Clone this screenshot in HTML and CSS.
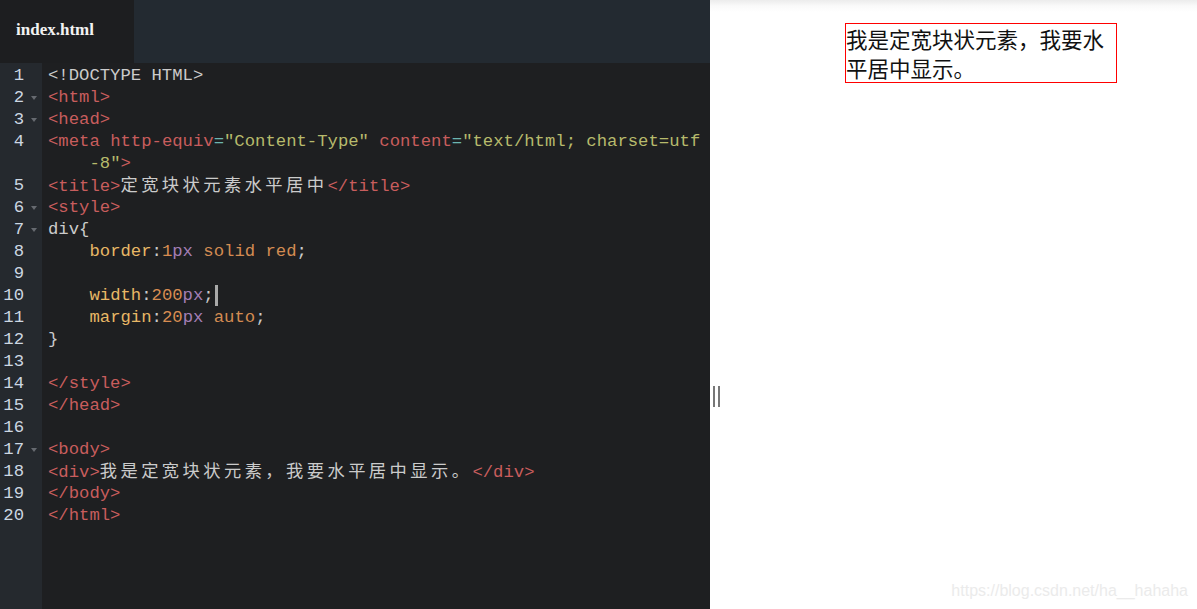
FILE: index.html
```html
<!DOCTYPE html>
<html lang="zh">
<head>
  <meta charset="UTF-8" />
  <meta name="viewport" content="width=device-width, initial-scale=1.0"/>
  <title>定宽块状元素水平居中</title>
  <link rel="stylesheet" href="styles.css">
</head>
<body>

<div class="editor-pane">
  <div class="tab-bar">
    <div class="tab">index.html</div>
  </div>

  <div class="code">
    <div class="line"><span class="ln">1</span><span class="src">&lt;!DOCTYPE HTML&gt;</span></div>
    <div class="line"><span class="ln fold">2</span><span class="src"><span class="tag">&lt;html&gt;</span></span></div>
    <div class="line"><span class="ln fold">3</span><span class="src"><span class="tag">&lt;head&gt;</span></span></div>
    <div class="line"><span class="ln">4</span><span class="src"><span class="tag">&lt;meta</span> <span class="tag">http-equiv</span><span class="eq">=</span><span class="str">"Content-Type"</span> <span class="tag">content</span><span class="eq">=</span><span class="str">"text/html; charset=utf</span></span></div>
    <div class="line"><span class="ln"></span><span class="src">    <span class="str">-8"</span><span class="tag">&gt;</span></span></div>
    <div class="line"><span class="ln">5</span><span class="src"><span class="tag">&lt;title&gt;</span><span class="cjk">定宽块状元素水平居中</span><span class="tag">&lt;/title&gt;</span></span></div>
    <div class="line"><span class="ln fold">6</span><span class="src"><span class="tag">&lt;style&gt;</span></span></div>
    <div class="line"><span class="ln fold">7</span><span class="src">div{</span></div>
    <div class="line"><span class="ln">8</span><span class="src">    <span class="prop">border</span>:<span class="num">1</span><span class="unit">px</span> <span class="kw">solid red</span>;</span></div>
    <div class="line"><span class="ln">9</span><span class="src"></span></div>
    <div class="line"><span class="ln">10</span><span class="src">    <span class="prop">width</span>:<span class="num">200</span><span class="unit">px</span>;<span class="cursor"></span></span></div>
    <div class="line"><span class="ln">11</span><span class="src">    <span class="prop">margin</span>:<span class="num">20</span><span class="unit">px</span> <span class="kw">auto</span>;</span></div>
    <div class="line"><span class="ln">12</span><span class="src">}</span></div>
    <div class="line"><span class="ln">13</span><span class="src"></span></div>
    <div class="line"><span class="ln">14</span><span class="src"><span class="tag">&lt;/style&gt;</span></span></div>
    <div class="line"><span class="ln">15</span><span class="src"><span class="tag">&lt;/head&gt;</span></span></div>
    <div class="line"><span class="ln">16</span><span class="src"></span></div>
    <div class="line"><span class="ln fold">17</span><span class="src"><span class="tag">&lt;body&gt;</span></span></div>
    <div class="line"><span class="ln">18</span><span class="src"><span class="tag">&lt;div&gt;</span><span class="cjk">我是定宽块状元素，我要水平居中显示。</span><span class="tag">&lt;/div&gt;</span></span></div>
    <div class="line"><span class="ln">19</span><span class="src"><span class="tag">&lt;/body&gt;</span></span></div>
    <div class="line"><span class="ln">20</span><span class="src"><span class="tag">&lt;/html&gt;</span></span></div>
  </div>
</div>

<div class="preview-pane">
  <div class="resize-handle"></div>
  <div class="demo-box">我是定宽块状元素，我要水平居中显示。</div>
  <div class="watermark">https://blog.csdn.net/ha__hahaha</div>
</div>

</body>
</html>
```

FILE: styles.css
```css
html, body {
  margin: 0;
  padding: 0;
  height: 100%;
}

body {
  display: flex;
  overflow: hidden;
}

/* editor */
.editor-pane {
  width: 710px;
  display: flex;
  flex-direction: column;
  background: #1e1f21;
}

.tab-bar {
  height: 63px;
  background: #232a31;
  display: flex;
}

.tab {
  width: 134px;
  background: #1d1e20;
  color: #f2f2f2;
  font-family: "Liberation Serif", serif;
  font-size: 17px;
  font-weight: bold;
  padding: 20px 0 0 16px;
  box-sizing: border-box;
}

.code {
  flex: 1;
  padding-top: 2px;
  background: linear-gradient(to right, #25292e 42px, #1e1f21 42px);
  font-family: "Liberation Mono", "Noto Sans CJK SC", monospace;
  font-size: 17.25px;
  line-height: 22px;
  color: #cbcbcb;
}

.line {
  display: flex;
  height: 22px;
}

.ln {
  width: 42px;
  flex-shrink: 0;
  box-sizing: border-box;
  padding-right: 18px;
  text-align: right;
  color: #ccd7e2;
  position: relative;
}

.ln.fold::after {
  content: "";
  position: absolute;
  left: 31px;
  top: 9px;
  border-left: 3px solid transparent;
  border-right: 3px solid transparent;
  border-top: 4px solid #666a70;
}

.src {
  padding-left: 6px;
  white-space: pre;
}

.tag { color: #c85d5d; }
.str { color: #b7ba6c; }
.eq { color: #6cb5b0; }
.prop { color: #e8b766; }
.num { color: #d88c51; }
.unit { color: #a37eb5; }
.kw { color: #d38b52; }

.cjk {
  font-family: "Noto Sans CJK SC", sans-serif;
  letter-spacing: 3.45px;
  line-height: 1;
}

.cursor {
  display: inline-block;
  width: 3px;
  height: 21px;
  background: #a9a9a9;
  vertical-align: top;
  margin-left: 1px;
}

/* preview */
.preview-pane {
  flex: 1;
  position: relative;
  background: linear-gradient(to bottom, #ececec 0, #fafafa 6px, #ffffff 12px);
  padding-top: 23px;
}

.demo-box {
  border: 1px solid red;
  width: 270px;
  margin-left: 135px;
  font-family: "Noto Sans CJK SC", sans-serif;
  font-size: 21.5px;
  line-height: 29px;
  color: #111;
}

.resize-handle {
  position: absolute;
  left: 3px;
  top: 386px;
  width: 2px;
  height: 21px;
  background: #777;
  box-shadow: 5px 0 0 #777;
}

.watermark {
  position: absolute;
  right: 9px;
  bottom: 9px;
  font-family: "Liberation Sans", sans-serif;
  font-size: 16px;
  color: #ebebeb;
}
```
